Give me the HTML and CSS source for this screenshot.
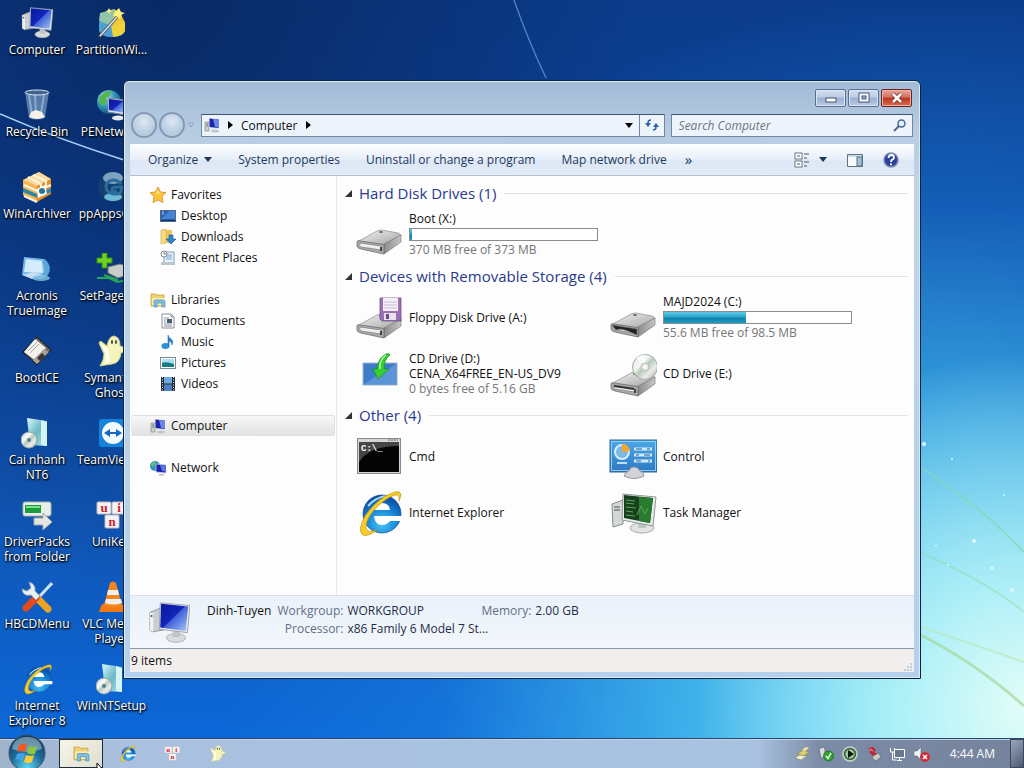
FILE: index.html
```html
<!DOCTYPE html>
<html lang="en">
<head>
    <meta charset="UTF-8">
    <meta name="viewport" content="width=device-width, initial-scale=1.0">
    <title>Computer</title>
    <link rel="stylesheet" href="styles.css">
</head>
<body>
    <!-- shared icons -->
    <svg class="sprite" aria-hidden="true">
        <defs>
            <linearGradient id="g-screen" x1="0" y1="0" x2="1" y2="1">
                <stop offset="0" stop-color="#0a16a0"/><stop offset=".48" stop-color="#1226b8"/>
                <stop offset=".5" stop-color="#3f5fda"/><stop offset="1" stop-color="#a9c8f8"/>
            </linearGradient>
            <linearGradient id="g-metal" x1="0" y1="0" x2="1" y2="1">
                <stop offset="0" stop-color="#f4f4f4"/><stop offset="1" stop-color="#a3a3a3"/>
            </linearGradient>
            <linearGradient id="g-side" x1="0" y1="0" x2="1" y2="0">
                <stop offset="0" stop-color="#8c8c8c"/><stop offset="1" stop-color="#c4c4c4"/>
            </linearGradient>
            <linearGradient id="g-blue" x1="0" y1="0" x2="0" y2="1">
                <stop offset="0" stop-color="#4aa8e6"/><stop offset="1" stop-color="#2f78c4"/>
            </linearGradient>
            <radialGradient id="g-ie" cx=".5" cy=".75" r=".75">
                <stop offset="0" stop-color="#48c4f8"/><stop offset=".55" stop-color="#1583d6"/><stop offset="1" stop-color="#0c439c"/>
            </radialGradient>
            <radialGradient id="g-globe" cx=".35" cy=".3" r=".8">
                <stop offset="0" stop-color="#b5ecf2"/><stop offset=".5" stop-color="#2f93b8"/><stop offset="1" stop-color="#0c4676"/>
            </radialGradient>
            <linearGradient id="g-case" x1="0" y1="0" x2="1" y2="1">
                <stop offset="0" stop-color="#d9fafa"/><stop offset=".5" stop-color="#6cb9c8"/><stop offset="1" stop-color="#a9e4e4"/>
            </linearGradient>
            <radialGradient id="g-orb" cx=".5" cy=".9" r=".9">
                <stop offset="0" stop-color="#5fd6f4"/><stop offset=".5" stop-color="#1f6c9c"/><stop offset="1" stop-color="#17395a"/>
            </radialGradient>
            <linearGradient id="g-disc" x1="0" y1="0" x2="1" y2="1">
                <stop offset="0" stop-color="#d6d6d6"/><stop offset=".35" stop-color="#f8f8f8"/>
                <stop offset=".5" stop-color="#b5cbb9"/><stop offset=".7" stop-color="#ececec"/><stop offset="1" stop-color="#a0a0a0"/>
            </linearGradient>
        </defs>
        <symbol id="i-computer" viewBox="0 0 48 48">
            <path d="M2 12l12-5 4 25-13 2-3-2z" fill="#c9cfd0" stroke="#8b9496"/>
            <path d="M2 12l4 1v21l-4-2z" fill="#eef1ef"/>
            <circle cx="4" cy="16" r="1.200" fill="#4a5052"/>
            <ellipse cx="32" cy="41" rx="11" ry="5" fill="#d8dcdc" stroke="#a9afb0"/>
            <path d="M28 30h8l1 10h-9z" fill="#bfc5c6"/>
            <path d="M14 1l34 3-3 31-32-4z" fill="#e8ecec" stroke="#959d9f"/>
            <path d="M15 2l31 3-3 28-29-4z" fill="url(#g-screen)"/>
        </symbol>
        <symbol id="i-computer-small" viewBox="0 0 16 16">
            <path d="M1 5h4v9H1z" fill="#cdd3cd" stroke="#8b968e" stroke-width=".8"/>
            <path d="M2 7h2M2 9h2" stroke="#69756c"/>
            <ellipse cx="11" cy="14" rx="4" ry="1.500" fill="#c2c8c8"/>
            <path d="M5 1l10 1v10L5 11z" fill="#dbe0e6"/>
            <path d="M5.500 1.500l9 1v8.500l-9-1z" fill="#1a22b4"/>
            <path d="M9 2l5.500.5v8L11 10z" fill="#6f86e2"/>
        </symbol>
        <symbol id="i-drive" viewBox="0 0 48 48">
            <path d="M2 31l20-11q2-1 5-1l16 3q3 1 3 3L29 34z" fill="url(#g-metal)" stroke="#8e8e8e" stroke-width=".7"/>
            <path d="M29 33l17-9v7L29 43z" fill="url(#g-side)" stroke="#707070" stroke-width=".6"/>
            <path d="M2 31q0-2 3-1l24 3.500v9.500L6 38q-4-1-4-3z" fill="#ababab" stroke="#6c6c6c" stroke-width=".8"/>
            <path d="M5 32l21 3v4L6 36q-2-1-1-4z" fill="#eee" stroke="#7b7b7b" stroke-width=".7"/>
            <path d="M26 36v4" stroke="#222" stroke-width="1.500"/>
            <ellipse cx="26" cy="21" rx="2" ry="1" fill="#666"/>
        </symbol>
        <symbol id="i-ie" viewBox="0 0 48 48">
            <circle cx="27" cy="25" r="19" fill="url(#g-ie)" stroke="#12488f" stroke-width=".7"/>
            <path d="M19 21q1-7 8-7t8 7z" fill="#fff"/>
            <path d="M19 27h28v5H35q-3 4-8 4-7 0-8-9z" fill="#fff"/>
            <path d="M13 17Q20 9 30 7" stroke="#9fd8f8" stroke-width="2" fill="none"/>
            <path d="M44 12Q49 1 40 3 23 8 10 27 2 42 8 46q5 2 14-5Q11 45 11 38q0-10 13-22Q34 7 41 6q4-1 3 6z" fill="#f5cc28" stroke="#c39413" stroke-width=".7"/>
        </symbol>
        <symbol id="i-globe" viewBox="0 0 32 32">
            <circle cx="13" cy="13" r="12" fill="url(#g-globe)"/>
            <path d="M4 8q5-7 11-6l-1 5-4 2 1 4-5 4-3-4zM15 13l7-4 2 5-5 7-4-2z" fill="#52b54d"/>
            <path d="M12 9l19 2-1 15-18-3z" fill="#d9e5ee" stroke="#78879a"/>
            <path d="M13 10l17 2-1 12-16-3z" fill="url(#g-screen)"/>
            <ellipse cx="22" cy="29" rx="6" ry="2.500" fill="#e5e9ea"/>
        </symbol>
        <symbol id="i-network" viewBox="0 0 16 16">
            <circle cx="5" cy="6" r="5" fill="#2f93b8"/>
            <path d="M1 5q2-4 5-4l-1 3-2 3z" fill="#6cc36a"/>
            <path d="M6 4l10 1v8L6 12z" fill="#1a22b4" stroke="#c3cfe4" stroke-width=".8"/>
            <path d="M10 5l5 .5v6L12 11z" fill="#5b78dc"/>
            <path d="M9 14h5v1.500H9z" fill="#b5bdc4"/>
        </symbol>
        <symbol id="i-ghost" viewBox="0 0 32 32">
            <path d="M3 8q1-3 3-1l5 4Q13 1 18 1q6 1 6 10l6 2q2 2-1 3l-4 2q-1 10-9 11-7 1-12 2 4-6 4-12z" fill="#f4f3b9" stroke="#cdd187"/>
            <path d="M5 9l7 4 2 14-5 2q3-10-4-20z" fill="#fffef0"/>
            <ellipse cx="16" cy="7" rx="1" ry="2" fill="#444"/><ellipse cx="20" cy="7" rx="1" ry="2" fill="#444"/>
        </symbol>
        <symbol id="i-library" viewBox="0 0 16 16">
            <path d="M1 2h5l1 1h7v11H1z" fill="#f0d272" stroke="#c7a03c" stroke-width=".8"/>
            <path d="M2 6h13v7H2z" fill="#fbeeb1"/>
            <path d="M4 15V9q0-1 1-1h8q2 0 2 2v5h-3v-4H7v4z" fill="#7fc0e2" stroke="#4b93ba" stroke-width=".7"/>
        </symbol>
        <symbol id="i-setup" viewBox="0 0 32 32">
            <path d="M6 1l20 3v25L9 28z" fill="url(#g-case)"/>
            <path d="M20 3l6 2v24l-6-1z" fill="#d4f5f2"/>
            <circle cx="8" cy="23" r="8" fill="url(#g-disc)" stroke="#8aa4aa"/>
            <circle cx="8" cy="23" r="2" fill="#57808c"/>
        </symbol>
    </svg>

    <main class="desktop">
        <svg class="wallpaper" viewBox="0 0 1024 738" preserveAspectRatio="none" aria-hidden="true">
            <g fill="none">
                <path d="M0 114Q60 140 124 160T330 210" stroke="#a8d0f8" stroke-width="1.600"/>
                <path d="M514 0Q528 40 546 78" stroke="#6fa8d8" stroke-width="1.300" opacity=".7"/>
                <path d="M905 458Q975 500 1024 552" stroke="#7fdcaf" stroke-width="2" opacity=".7"/>
                <path d="M915 550Q985 580 1024 612" stroke="#85dca6" stroke-width="2" opacity=".4"/>
                <path d="M915 632Q975 662 1024 706" stroke="#a2d99b" stroke-width="3" opacity=".7"/>
                <path d="M915 625Q975 645 1024 662" stroke="#b6e8b0" stroke-width="2" opacity=".6"/>
            </g>
            <g fill="#d9f6ff">
                <circle cx="924" cy="444" r="2"/><circle cx="952" cy="459" r="1"/><circle cx="1004" cy="495" r="1"/>
                <circle cx="974" cy="541" r="2"/><circle cx="936" cy="546" r="1"/><circle cx="992" cy="568" r="2"/>
                <circle cx="948" cy="565" r="1"/><circle cx="1012" cy="590" r="2"/>
            </g>
        </svg>

        <nav class="shortcuts" aria-label="Desktop">
            <a class="shortcut" href="#"><svg><use href="#i-computer"/></svg><span>Computer</span></a>
            <a class="shortcut" href="#">
                <svg viewBox="0 0 32 32"><path d="M3 16q0-5 13-5t13 5v8q-2 6-13 6T3 24z" fill="#4f9fd0"/><path d="M14 12q14-1 15 4v8q-2 5-12 6z" fill="#f0d23b"/><path d="M3 14L4 6l14-4 7 4 1 9-10 4z" fill="#91c4a8"/><path d="M18 3l7 4 4 9-12 3z" fill="#efc938"/><path d="M3 30L21 10" stroke="#47535e" stroke-width="3"/><path d="M4 29L21 10" stroke="#dfe6e9" stroke-width="1.500"/><path d="M23 1l2 4 4 1-4 2-1 4-3-3-4 0 2-4zM13 1l1 2 2 1-2 1-1 2-1-2-2-1 2-1z" fill="#fff27a"/></svg>
                <span>PartitionWi...</span>
            </a>
            <a class="shortcut" href="#">
                <svg viewBox="0 0 32 32"><path d="M4 3h24l-4 26q-8 3-16 0z" fill="#7fa3c8" opacity=".65"/><path d="M8 6l3 20M14 6l1 20M23 6l-3 18" stroke="#cfe3f6" stroke-width="2" opacity=".45"/><ellipse cx="16" cy="3.500" rx="12" ry="2.500" fill="#42648c" stroke="#d7e7f6"/><path d="M8 28l2-5 5-2 6 2 3 5q-8 4-16 0z" fill="#f3f1e8"/></svg>
                <span>Recycle Bin</span>
            </a>
            <a class="shortcut" href="#"><svg><use href="#i-globe"/></svg><span>PENetwork</span></a>
            <a class="shortcut" href="#">
                <svg viewBox="0 0 32 32"><path d="M2 9L18 1l12 7v15L16 31 2 24z" fill="#e78b1f"/><path d="M2 9l14 6v16L2 24z" fill="#f6b65a"/><path d="M2 9L18 1l12 7-14 7z" fill="#fbd89e"/><path d="M7 6l13 7v5M12 4l13 6v5M3 14l13 6 14-6M3 25l13 6" stroke="#fff6e0" stroke-width="2" fill="none"/><path d="M2 17l14 6v4L2 21zM24 20l6-3v4l-6 3z" fill="#2a87a6"/><path d="M16 18l8-4 2 9-9 4z" fill="#fff"/><circle cx="21" cy="20" r="3" fill="#2478a0"/></svg>
                <span>WinArchiver</span>
            </a>
            <a class="shortcut" href="#">
                <svg viewBox="0 0 32 32"><circle cx="17" cy="16" r="15" fill="#153f6e"/><ellipse cx="17" cy="7" rx="10" ry="6" fill="#7ba3bf"/><ellipse cx="17" cy="26" rx="9" ry="4" fill="#6dbad4"/><path d="M25 13q-3-4-8-4-7 1-7 7t8 7 8-7h-5q-5 0-5 3t5 1" stroke="#2b6c9c" stroke-width="3" fill="none"/></svg>
                <span>ppAppsGen</span>
            </a>
            <a class="shortcut" href="#">
                <svg viewBox="0 0 32 32"><path d="M3 4l20 2 2 18-24-2z" fill="#79b9e6"/><path d="M5 6l16 2 1 12-19-1z" fill="#d4ecfb"/><path d="M1 22l12-3 9 3-11 4z" fill="#c4e0f0"/><path d="M24 6q8 8 3 16-5 6-14 3 12-2 11-12-2-3-3-4z" fill="#5da6d8"/><ellipse cx="20" cy="25" rx="9" ry="3" fill="#83c5de" opacity=".8"/></svg>
                <span>Acronis TrueImage</span>
            </a>
            <a class="shortcut" href="#">
                <svg viewBox="0 0 32 32"><path d="M12 14l12-3 10 3v7l-12 4-10-5z" fill="#c8cdca" stroke="#737b78"/><path d="M1 25h12l8 4 11-2M8 22l14 5" stroke="#25a655" stroke-width="2" fill="none"/><path d="M6 0h5v5h5v5h-5v5H6v-5H1V5h5z" fill="#6fd024" stroke="#2f8d10"/></svg>
                <span>SetPageFile</span>
            </a>
            <a class="shortcut" href="#">
                <svg viewBox="0 0 32 32"><path d="M16 2l14 13-14 15L2 17z" fill="#6d6860" stroke="#111"/><path d="M14 4l11 9-11 12L3 17z" fill="#f3f1e9"/><path d="M7 16l9-9M9 18l9-9" stroke="#aaa" stroke-width="1"/><path d="M23 14l5 3-12 12-4-4z" fill="#a7a297"/><path d="M21 18l3 3-5 5-3-3z" fill="#383530"/></svg>
                <span>BootICE</span>
            </a>
            <a class="shortcut" href="#"><svg><use href="#i-ghost"/></svg><span>Symantec Ghost</span></a>
            <a class="shortcut" href="#"><svg><use href="#i-setup"/></svg><span>Cai nhanh NT6</span></a>
            <a class="shortcut" href="#">
                <svg viewBox="0 0 32 32"><rect x="3" y="2" width="28" height="28" rx="3" fill="#1582dc"/><circle cx="17" cy="16" r="11" fill="#f2f9ff"/><path d="M8 16l6-4v3h6v-3l6 4-6 4v-3h-6v3z" fill="#1768c4"/></svg>
                <span>TeamViewer</span>
            </a>
            <a class="shortcut" href="#">
                <svg viewBox="0 0 32 32"><rect x="2" y="3" width="28" height="14" rx="2" fill="#e8eee8" stroke="#a5b7a9"/><rect x="4" y="6" width="16" height="8" fill="#1d9e3c"/><path d="M5 8h14" stroke="#7fe08c" stroke-width="2"/><path d="M13 19h9v-5l9 9-9 8v-5h-9z" fill="#e5e6e2" stroke="#a6a9a5"/></svg>
                <span>DriverPacks from Folder</span>
            </a>
            <a class="shortcut" href="#">
                <svg class="unikey" viewBox="0 0 32 32"><rect x="1" y="3" width="14" height="12" rx="1"/><rect x="16" y="3" width="14" height="12" rx="1"/><rect x="9" y="16" width="14" height="13" rx="1"/><text x="8" y="13">u</text><text x="23" y="13">i</text><text x="16" y="27">n</text></svg>
                <span>UniKey</span>
            </a>
            <a class="shortcut" href="#">
                <svg viewBox="0 0 32 32"><path d="M15 16l12 12" stroke="#f0a223" stroke-width="7" stroke-linecap="round"/><path d="M19 15L31 2" stroke="#cde0ef" stroke-width="3"/><path d="M5 27l10-10" stroke="#e34b1c" stroke-width="7" stroke-linecap="round"/><path d="M1 8q1 8 9 6l5 5 4-4-5-5q1-7-6-9l2 6-4 3z" fill="#e9f0f5" stroke="#8ba0b0"/></svg>
                <span>HBCDMenu</span>
            </a>
            <a class="shortcut" href="#">
                <svg viewBox="0 0 32 32"><path d="M5 25l3-3h16l7 5-1 4H3z" fill="#ef7a16"/><path d="M14 2q3-3 6 0l6 22q-9 5-18 0z" fill="#f5861d"/><path d="M12 9h10l1 5H11zM10 18h15l1 4q-9 3-17 0z" fill="#f1efec"/></svg>
                <span>VLC Media Player</span>
            </a>
            <a class="shortcut" href="#"><svg><use href="#i-ie"/></svg><span>Internet Explorer 8</span></a>
            <a class="shortcut" href="#"><svg><use href="#i-setup"/></svg><span>WinNTSetup</span></a>
        </nav>

        <section class="window" aria-label="Computer">
            <header class="titlebar">
                <button class="win-btn" aria-label="Minimize"><svg viewBox="0 0 12 12"><rect x="1" y="6" width="10" height="4" fill="#fff" stroke="#44557a"/></svg></button>
                <button class="win-btn" aria-label="Maximize"><svg viewBox="0 0 12 12"><rect x="1" y="1" width="10" height="9" fill="#fff" stroke="#44557a"/><rect x="4" y="4" width="4" height="3" fill="#9fb4d4" stroke="#44557a"/></svg></button>
                <button class="win-btn close" aria-label="Close"><svg viewBox="0 0 12 12"><path d="M2 2l8 8M10 2l-8 8" stroke="#6b2b2b" stroke-width="4"/><path d="M2 2l8 8M10 2l-8 8" stroke="#fff" stroke-width="2.500"/></svg></button>
            </header>

            <div class="navbar">
                <div class="history">
                    <button class="round" aria-label="Back"></button>
                    <button class="round" aria-label="Forward"></button>
                    <button class="recent" aria-label="Recent pages"><svg viewBox="0 0 8 6"><path d="M1 1h6L4 5z" fill="none" stroke="#93a5bd"/></svg></button>
                </div>
                <div class="address">
                    <svg class="small-icon"><use href="#i-computer-small"/></svg>
                    <svg class="arrow" viewBox="0 0 5 8"><path d="M0 0l5 4-5 4z"/></svg>
                    <a href="#">Computer</a>
                    <svg class="arrow" viewBox="0 0 5 8"><path d="M0 0l5 4-5 4z"/></svg>
                    <button class="drop" aria-label="Previous locations"><svg viewBox="0 0 8 5"><path d="M0 0h8L4 5z"/></svg></button>
                    <button class="refresh" aria-label="Refresh"><svg viewBox="0 0 16 16"><path d="M7 3Q4 3 4 6M9 13q3 0 3-3" fill="none" stroke="#2f5fa8" stroke-width="1.500"/><path d="M1 6h6l-3 4zM9 10h6l-3-4z" fill="#2f5fa8"/></svg></button>
                </div>
                <label class="search">
                    <input type="search" placeholder="Search Computer" aria-label="Search Computer">
                    <svg viewBox="0 0 14 14"><circle cx="8.500" cy="5.500" r="3.500" fill="#e5f2fa" stroke="#476994" stroke-width="1.500"/><path d="M6 8l-5 5" stroke="#476994" stroke-width="2"/></svg>
                </label>
            </div>

            <div class="commands">
                <button>Organize <svg class="caret" viewBox="0 0 8 5"><path d="M0 0h8L4 5z"/></svg></button>
                <button>System properties</button>
                <button>Uninstall or change a program</button>
                <button>Map network drive</button>
                <button class="more" aria-label="More">»</button>
                <div class="views">
                    <button class="view" aria-label="Change your view">
                        <svg class="small-icon" viewBox="0 0 16 16"><rect x="1" y="1" width="7" height="6" fill="#fff" stroke="#6b7683"/><rect x="1" y="9" width="7" height="6" fill="#fff" stroke="#6b7683"/><path d="M3 4h3M3 12h3M10 2h5M10 6h3M10 10h5M10 14h3" stroke="#42566b"/></svg>
                        <svg class="caret" viewBox="0 0 8 5"><path d="M0 0h8L4 5z"/></svg>
                    </button>
                    <button aria-label="Show the preview pane"><svg class="small-icon" viewBox="0 0 16 16"><path d="M.5 2.500h15v12H.5z" fill="#f7fbff" stroke="#597387"/><path d="M1 4h14" stroke="#a3b9c6"/><rect x="10" y="5" width="5" height="9" fill="#9fc3d0" stroke="#597387"/></svg></button>
                    <button aria-label="Get help"><svg class="small-icon" viewBox="0 0 16 16"><circle cx="8" cy="8" r="7" fill="#2b3f9e" stroke="#8190b2" stroke-width="1.500"/><path d="M5.500 6q0-3 3-3 2.500.2 2.500 2.400 0 1.300-1.500 2T8 10" fill="none" stroke="#fff" stroke-width="1.800"/><circle cx="8" cy="12.300" r="1.100" fill="#fff"/></svg></button>
                </div>
            </div>

            <div class="content">
                <nav class="sidebar" aria-label="Folders">
                    <ul>
                        <li><a href="#"><svg class="small-icon" viewBox="0 0 16 16"><path d="M8 0l2.500 5 5.500.6-4 4 1 6L8 13l-5 2.600 1-6-4-4L5.500 5z" fill="#fbc43b" stroke="#d98a25" stroke-width=".8"/><path d="M8 3l1.300 3 3 .5H6z" fill="#fff0a8"/></svg>Favorites</a></li>
                        <li class="child"><a href="#"><svg class="small-icon" viewBox="0 0 16 16"><rect x=".5" y="2.500" width="15" height="11" fill="#2a5eaf" stroke="#4c6a94"/><path d="M1 11L9 3h6v8z" fill="#4582cf"/><path d="M1 12.500h14" stroke="#122f58"/><path d="M2 4h2M2 6h2" stroke="#b5d6f6"/></svg>Desktop</a></li>
                        <li class="child"><a href="#"><svg class="small-icon" viewBox="0 0 16 16"><path d="M1 1l5-1v14l-5 1z" fill="#f6dc82" stroke="#d2a944" stroke-width=".6"/><path d="M6 1h6v13H6z" fill="#eac45c"/><path d="M9 6h4v4h3l-5 5-5-5h3z" fill="#2b86cc" stroke="#185890" stroke-width=".6"/></svg>Downloads</a></li>
                        <li class="child"><a href="#"><svg class="small-icon" viewBox="0 0 16 16"><rect x="4" y="2" width="10" height="11" fill="#e9f2fb" stroke="#7f9cb8"/><path d="M6 5h6M6 7h6M6 9h6" stroke="#7aa4d4"/><path d="M1 12h14v3H1z" fill="#b9c6ce"/><circle cx="4" cy="4" r="3" fill="#fff" stroke="#7c8994"/><path d="M4 2v2h2" fill="none" stroke="#444" stroke-width=".7"/></svg>Recent Places</a></li>
                    </ul>
                    <ul>
                        <li><a href="#"><svg class="small-icon"><use href="#i-library"/></svg>Libraries</a></li>
                        <li class="child"><a href="#"><svg class="small-icon" viewBox="0 0 16 16"><path d="M2 1h9l3 3v11H2z" fill="#fdfdfd" stroke="#8a9299"/><path d="M11 1v3h3M4 5h5M4 7h2M4 9h2M4 11h8M4 13h8" fill="none" stroke="#8a9299"/><rect x="7" y="6" width="5" height="4" fill="#465f70"/></svg>Documents</a></li>
                        <li class="child"><a href="#"><svg class="small-icon" viewBox="0 0 16 16"><ellipse cx="5.500" cy="12" rx="4" ry="3" fill="#2c90d8"/><path d="M8 12V1q1 3 3 4 3 2 1 6 0-3-3-4v5z" fill="#287ec4" stroke="#287ec4" stroke-width=".6"/></svg>Music</a></li>
                        <li class="child"><a href="#"><svg class="small-icon" viewBox="0 0 16 16"><rect x=".5" y="2.500" width="15" height="11" fill="#fff" stroke="#7b8b96"/><rect x="2" y="4" width="12" height="8" fill="#a6dff0"/><path d="M2 8q4-2 12 1v3H2z" fill="#187a86"/></svg>Pictures</a></li>
                        <li class="child"><a href="#"><svg class="small-icon" viewBox="0 0 16 16"><rect x="1" y="1" width="14" height="14" fill="#1e2a36"/><rect x="4" y="1" width="8" height="6.500" fill="#70a8e0"/><rect x="4" y="8.500" width="8" height="6.500" fill="#4d7fc0"/><path d="M2.500 1v14M13.500 1v14" stroke="#e0e8ee" stroke-dasharray="1 1.500"/></svg>Videos</a></li>
                    </ul>
                    <ul>
                        <li class="selected"><a href="#"><svg class="small-icon"><use href="#i-computer-small"/></svg>Computer</a></li>
                    </ul>
                    <ul>
                        <li><a href="#"><svg class="small-icon"><use href="#i-network"/></svg>Network</a></li>
                    </ul>
                </nav>

                <div class="files">
                    <section>
                        <h2><button><svg viewBox="0 0 7 7"><path d="M7 0v7H0z"/></svg>Hard Disk Drives (1)</button></h2>
                        <div class="items">
                            <a class="item" href="#">
                                <svg><use href="#i-drive"/></svg>
                                <div><p>Boot (X:)</p><div class="bar" role="progressbar" aria-label="Boot (X:) used" aria-valuenow="1"><div style="width: 1%"></div></div><p class="muted">370 MB free of 373 MB</p></div>
                            </a>
                        </div>
                    </section>
                    <section>
                        <h2><button><svg viewBox="0 0 7 7"><path d="M7 0v7H0z"/></svg>Devices with Removable Storage (4)</button></h2>
                        <div class="items">
                            <a class="item" href="#">
                                <svg viewBox="0 0 48 48"><use href="#i-drive" width="48" height="48" y="1"/><path d="M25 4h21v23H27l-2-2z" fill="#9b70b4" stroke="#70518a" stroke-width=".8"/><rect x="28" y="4" width="15" height="13" fill="#f4eef7"/><path d="M29 8h13M29 11h13M29 14h13" stroke="#cbbcd6"/><rect x="29" y="19" width="12" height="7" fill="#e9e1ee"/><rect x="31" y="20" width="3" height="5" fill="#6f4c88"/></svg>
                                <div><p>Floppy Disk Drive (A:)</p></div>
                            </a>
                            <a class="item" href="#">
                                <svg viewBox="0 0 48 48"><use href="#i-drive" width="48" height="48"/><path d="M3 31l25 4v6l-9-4q-8-3-12-1z" fill="#222" stroke="#777" stroke-width=".6"/></svg>
                                <div><p>MAJD2024 (C:)</p><div class="bar" role="progressbar" aria-label="MAJD2024 (C:) used" aria-valuenow="44"><div style="width: 44%"></div></div><p class="muted">55.6 MB free of 98.5 MB</p></div>
                            </a>
                            <a class="item" href="#">
                                <svg viewBox="0 0 48 48"><rect x="8" y="13" width="34" height="22" fill="#3c7cc8" stroke="#a1b7d0"/><path d="M9 34L41 14v20z" fill="#5b95d8"/><path d="M31 4q4-1 4 1-6 4-6 14h5L23 29 18 19h4Q23 8 31 4z" fill="#35cf35" stroke="#1b961c" stroke-width=".8"/><path d="M31 5q-7 5-6 14" fill="none" stroke="#b2f5a5" stroke-width="1.500"/></svg>
                                <div><p>CD Drive (D:)</p><p>CENA_X64FREE_EN-US_DV9</p><p class="muted">0 bytes free of 5.16 GB</p></div>
                            </a>
                            <a class="item" href="#">
                                <svg viewBox="0 0 48 48"><use href="#i-drive" width="48" height="48" y="3"/><path d="M5 36l20 3" stroke="#333" stroke-width="2"/><circle cx="36" cy="17" r="12.500" fill="url(#g-disc)" stroke="#a5aaa5"/><path d="M36 17L27 8q5-4 10-3z" fill="#fff" opacity=".7"/><circle cx="36" cy="17" r="4" fill="#e7ebe7" stroke="#b6bab6"/><circle cx="36" cy="17" r="1.500" fill="#fff"/></svg>
                                <div><p>CD Drive (E:)</p></div>
                            </a>
                        </div>
                    </section>
                    <section>
                        <h2><button><svg viewBox="0 0 7 7"><path d="M7 0v7H0z"/></svg>Other (4)</button></h2>
                        <div class="items">
                            <a class="item" href="#">
                                <svg viewBox="0 0 48 48"><rect x="2.500" y="5.500" width="43" height="35" fill="#d5d5d5" stroke="#8b8b8b"/><path d="M33 7h10" stroke="#555" stroke-dasharray="2 1"/><rect x="4" y="9" width="40" height="30" fill="#050505"/><path d="M4 9h40v4Q14 13 4 29z" fill="#464646"/><text class="prompt" x="6" y="18">C:\_</text></svg>
                                <div><p>Cmd</p></div>
                            </a>
                            <a class="item" href="#">
                                <svg viewBox="0 0 48 48"><rect x="1" y="7" width="47" height="32" fill="url(#g-blue)" stroke="#2e659a"/><rect x="2.500" y="8.500" width="44" height="29" fill="none" stroke="#8fcdf2"/><circle cx="13" cy="19" r="7" fill="#7eb8e4" stroke="#d5efff" stroke-width="2"/><path d="M13 19v-8q7 0 8 7z" fill="#f3a52c"/><path d="M25 16h18M25 22h18M25 28h18" stroke="#d2ebfb" stroke-width="3"/><path d="M27 16h6M38 16h3M27 22h3M35 22h6M27 28h5M39 28h2" stroke="#1a5d9b"/><path d="M8 30h10" stroke="#b7e2fa" stroke-width="2"/><path d="M15 43q1-4 5-5 1-4 5-4t6 4q4 1 4 5-10 5-20 0z" fill="#d5d2d8" stroke="#9c98a3"/></svg>
                                <div><p>Control</p></div>
                            </a>
                            <a class="item" href="#">
                                <svg><use href="#i-ie"/></svg>
                                <div><p>Internet Explorer</p></div>
                            </a>
                            <a class="item" href="#">
                                <svg viewBox="0 0 48 48"><path d="M3 15l11-4v24l-10 3z" fill="#d3d8d5" stroke="#858c88"/><path d="M5 18h6M5 21h6" stroke="#4a504c"/><ellipse cx="33" cy="39" rx="12" ry="5" fill="#e1e4e2" stroke="#a6aca8"/><path d="M29 32h8v7h-8z" fill="#bfc5c1"/><path d="M14 5l33 3-3 29-31-6z" fill="#e8ecea" stroke="#909793"/><path d="M15 6l29 3-3 25-26-5z" fill="#183f1e"/><path d="M30 8l14 1-3 25-11-2z" fill="#2a7a32"/><path d="M17 11l9 1M17 14l8 1M17 18l10 1M17 22l7 1M17 26l9 1M28 26l4-9 4 8 3-6" stroke="#58a85a" fill="none"/></svg>
                                <div><p>Task Manager</p></div>
                            </a>
                        </div>
                    </section>
                </div>
            </div>

            <div class="details">
                <svg><use href="#i-computer"/></svg>
                <p class="name">Dinh-Tuyen</p>
                <dl>
                    <dt>Workgroup:</dt><dd>WORKGROUP</dd>
                    <dt>Processor:</dt><dd>x86 Family 6 Model 7 St...</dd>
                </dl>
                <dl>
                    <dt>Memory:</dt><dd>2.00 GB</dd>
                </dl>
            </div>
            <footer class="statusbar">
                <span>9 items</span>
                <svg viewBox="0 0 10 10"><path d="M8 1v2M5 4v2M8 4v2M2 7v2M5 7v2M8 7v2" stroke="#c6ccd4" stroke-width="2"/></svg>
            </footer>
        </section>
    </main>

    <footer class="taskbar">
        <button class="start" aria-label="Start">
            <svg viewBox="0 0 38 38"><circle cx="19" cy="19" r="18" fill="url(#g-orb)" stroke="#35566e"/><path d="M4 15Q6 3 19 3t15 12q-14 6-30 0z" fill="#cfe6ee" opacity=".45"/><path d="M11 11q5-3 8 0l-2 7q-4-2-8 0z" fill="#ee5a24"/><path d="M21 12q4 2 8 0l-2 8q-4 1-8-1z" fill="#8cc63e"/><path d="M9 20q4-2 8 0l-2 7q-4-3-8-1z" fill="#3fa4e4"/><path d="M18 21q4 2 8 0l-2 7q-4 2-8 0z" fill="#fccb32"/></svg>
        </button>
        <button class="task active" aria-label="Windows Explorer"><svg><use href="#i-library"/></svg></button>
        <button class="task" aria-label="Internet Explorer"><svg><use href="#i-ie"/></svg></button>
        <button class="task" aria-label="UniKey">
            <svg class="unikey" viewBox="0 0 32 32"><rect x="1" y="3" width="14" height="12" rx="1"/><rect x="16" y="3" width="14" height="12" rx="1"/><rect x="9" y="16" width="14" height="13" rx="1"/><text x="8" y="13">u</text><text x="23" y="13">i</text><text x="16" y="27">n</text></svg>
        </button>
        <button class="task" aria-label="Ghost"><svg><use href="#i-ghost"/></svg></button>
        <div class="tray">
            <svg viewBox="0 0 16 16"><path d="M1 12l6-4 6 2-6 4z" fill="#f1efd8" stroke="#8b8a62" stroke-width=".7"/><path d="M3 8l6-4 6 2-5 4z" fill="#d8cf75" stroke="#8b8340" stroke-width=".7"/><path d="M8 4l4-3 3 1-4 3z" fill="#f4e99c"/></svg>
            <svg viewBox="0 0 16 16"><path d="M1 3l4-2 2 2v8l-4 1z" fill="#d9dde0" stroke="#5c6670" stroke-width=".7"/><circle cx="10.500" cy="10" r="5" fill="#2fa42f" stroke="#14681a" stroke-width=".7"/><path d="M8 10l2 2.500L13 7" fill="none" stroke="#fff" stroke-width="1.500"/></svg>
            <svg viewBox="0 0 16 16"><circle cx="8" cy="8" r="7" fill="#3e6549" stroke="#c3d8c4" stroke-width="1.500"/><circle cx="8" cy="8" r="4.500" fill="#a4c6a2"/><path d="M6 4l6 4-6 4z" fill="#06180a"/></svg>
            <svg viewBox="0 0 16 16"><path d="M8 9l5-2 2 4-5 4-4-3z" fill="#c9cacc" stroke="#60636a" stroke-width=".7"/><path d="M2 2l5-1 3 3-2 2 3 2-4 2-4-4 2-1z" fill="#c42435"/><path d="M4 3l3 2" stroke="#f8b9bd"/></svg>
            <svg viewBox="0 0 16 16"><path d="M4.500 3.500h10v8h-10z" fill="#69788f" stroke="#fff"/><path d="M7 14.500h5M9.500 11v3M.5 2v4h4V2M2.500 6v8h4" fill="none" stroke="#fff"/></svg>
            <svg viewBox="0 0 16 16"><path d="M0 5h3l4-4v13l-4-4H0z" fill="#f0f2f5" stroke="#596578" stroke-width=".6"/><circle cx="11" cy="11" r="5" fill="#cf2e39"/><path d="M9 9l4 4M13 9l-4 4" stroke="#fff" stroke-width="1.500"/></svg>
        </div>
        <time>4:44 AM</time>
        <button class="show-desktop" aria-label="Show desktop"></button>
    </footer>
    <svg class="cursor" viewBox="0 0 12 18" aria-hidden="true"><path d="M1 1v14l3-3 2 5 2-1-2-5h4z" fill="#fff" stroke="#000"/></svg>
</body>
</html>
```
FILE: styles.css
```css
* {
    box-sizing: border-box;
}
body {
    margin: 0;
    height: 100vh;
    display: flex;
    flex-direction: column;
    overflow: hidden;
    font-family: "Open Sans", "Noto Sans", sans-serif;
    font-size: 12px;
    line-height: 15px;
    color: #111;
}
button {
    font: inherit;
    color: inherit;
    background: none;
    border: none;
    padding: 0;
    display: flex;
    align-items: center;
    justify-content: center;
}
a {
    color: inherit;
    text-decoration: none;
}
p, ul, dl, dd, h2 {
    margin: 0;
    padding: 0;
}
ul {
    list-style: none;
}
svg {
    flex-shrink: 0;
}
.sprite {
    position: absolute;
    width: 0;
    height: 0;
}
.small-icon {
    width: 16px;
    height: 16px;
}
.unikey rect {
    fill: #f7f2f2;
    stroke: #bdb6c4;
}
.unikey text {
    font-family: "Liberation Serif", serif;
    font-weight: bold;
    font-size: 13px;
    fill: #d02030;
    text-anchor: middle;
    text-shadow: none;
}
.prompt {
    font-family: "Liberation Mono", monospace;
    font-weight: bold;
    font-size: 9px;
    fill: #fff;
}

/* desktop */
.desktop {
    flex: 1;
    min-height: 0;
    position: relative;
    background:
        radial-gradient(ellipse 32% 48% at 100% 96%, #e2fdf8 0%, rgba(190, 246, 248, 0.85) 35%, rgba(120, 226, 248, 0) 100%),
        radial-gradient(ellipse 70% 100% at 92% 98%, #6fe0fa 0%, rgba(66, 184, 236, 0.85) 38%, rgba(30, 130, 225, 0.45) 70%, rgba(20, 100, 210, 0) 100%),
        radial-gradient(ellipse 45% 80% at 16% 0%, rgba(8, 34, 84, 0.7), rgba(8, 40, 100, 0)),
        linear-gradient(180deg, #0b3b8a 0%, #0c4298 35%, #1055b4 70%, #0c68d8 100%);
}
.wallpaper {
    position: absolute;
    inset: 0;
    width: 100%;
    height: 100%;
}
.shortcuts {
    position: relative;
    display: grid;
    grid-template-columns: 74px 75px;
    grid-auto-rows: 82px;
}
.shortcut {
    display: flex;
    flex-direction: column;
    align-items: center;
    gap: 3px;
    padding-top: 7px;
    color: #fff;
    text-align: center;
    text-shadow: 1px 1px 2px #000, 0 1px 2px #000;
}
.shortcut svg {
    width: 32px;
    height: 32px;
}

/* explorer window */
.window {
    position: absolute;
    top: 80px;
    right: 103px;
    bottom: 59px;
    left: 123px;
    display: flex;
    flex-direction: column;
    padding: 0 6px 6px;
    border: 1px solid #10243f;
    border-radius: 6px 6px 0 0;
    background: linear-gradient(180deg, #a2bbd6 0, #b7cbe2 50px, #c0d3e8 100px, #b4d0ec 100%);
    box-shadow: inset 0 0 0 1px #dcebf8;
}
.titlebar {
    display: flex;
    justify-content: flex-end;
    gap: 2px;
    padding: 8px 2px 0;
    height: 31px;
}
.win-btn {
    width: 31px;
    height: 18px;
    border: 1px solid #5a6f90;
    border-radius: 2px;
    background: linear-gradient(180deg, #d3dff0 0%, #bccce2 45%, #9bb0cf 50%, #b9cce4 100%);
    box-shadow: inset 0 0 0 1px #dbe7f5;
}
.win-btn svg {
    width: 12px;
    height: 12px;
}
.close {
    border-color: #6a2424;
    background: linear-gradient(180deg, #e6a89c 0%, #d4705f 45%, #b93422 50%, #d86e50 100%);
    box-shadow: inset 0 0 0 1px #eab2a4;
}
.navbar {
    display: flex;
    align-items: center;
    gap: 6px;
    height: 32px;
    padding: 0 1px 6px;
}
.history {
    display: flex;
    align-items: center;
    gap: 2px;
    width: 64px;
}
.round {
    width: 26px;
    height: 26px;
    border: 2px solid #8499b4;
    border-radius: 50%;
    background: radial-gradient(circle at 50% 35%, #dce8f4, #b6c9de 70%, #d5e4f2);
}
.recent svg {
    width: 8px;
    height: 6px;
}
.address, .search {
    display: flex;
    align-items: center;
    height: 23px;
    border: 1px solid #6f87a4;
    border-top-color: #40566f;
    background: #eef4fc;
}
.address {
    flex: 1;
    gap: 8px;
    padding-left: 2px;
}
.arrow {
    width: 5px;
    height: 8px;
}
.drop {
    margin-left: auto;
    width: 12px;
}
.drop svg, .caret {
    width: 8px;
    height: 5px;
}
.caret {
    fill: #1e395b;
}
.refresh {
    align-self: stretch;
    width: 25px;
    margin-left: -4px;
    border-left: 1px solid #6f87a4;
}
.refresh svg {
    width: 16px;
    height: 16px;
}
.search {
    width: 31%;
    padding: 0 5px 0 7px;
}
.search input {
    flex: 1;
    min-width: 0;
    padding: 0;
    border: none;
    outline: none;
    background: none;
    font: inherit;
}
.search input::placeholder {
    color: #6d7680;
    font-style: italic;
}
.search svg {
    width: 14px;
    height: 14px;
}
.commands {
    display: flex;
    align-items: center;
    gap: 26px;
    height: 32px;
    padding: 0 15px 0 18px;
    color: #1e395b;
    background: linear-gradient(180deg, #fbfdff 0%, #eaf1fb 45%, #dde7f5 55%, #e2ebf7 100%);
    border-bottom: 1px solid #b2c1d4;
    white-space: nowrap;
}
.commands button {
    gap: 6px;
}
.commands .more {
    margin-left: -8px;
    font-size: 15px;
}
.views {
    display: flex;
    gap: 20px;
    margin-left: auto;
}
.commands .view {
    gap: 9px;
}
.content {
    flex: 1;
    min-height: 0;
    display: flex;
    background: #fdfdfd;
}
.sidebar {
    display: flex;
    flex-direction: column;
    gap: 21px;
    width: 207px;
    padding: 8px 1px 0;
    border-right: 1px solid #e2e8f0;
}
.sidebar a {
    display: flex;
    align-items: center;
    gap: 5px;
    height: 21px;
    padding-left: 18px;
    border: 1px solid transparent;
}
.sidebar .child a {
    padding-left: 28px;
}
.sidebar .selected a {
    border-color: #e0e0e0;
    border-left-color: #f0f0f0;
    border-radius: 2px;
    background: linear-gradient(180deg, #f7f7f7, #e2e2e2);
}
.files {
    flex: 1;
    min-width: 0;
    padding: 4px 6px 0 8px;
}
.files h2 {
    display: flex;
    align-items: center;
    gap: 8px;
    height: 27px;
    font-size: 15px;
    font-weight: normal;
    color: #2a3a8c;
}
.files h2::after {
    content: "";
    flex: 1;
    height: 1px;
    background: #e0e4ea;
}
.files h2 button {
    gap: 7px;
}
.files h2 svg {
    width: 7px;
    height: 7px;
    fill: #333;
}
.items {
    display: grid;
    grid-template-columns: repeat(auto-fill, 254px);
    grid-auto-rows: 56px;
    padding-left: 10px;
}
.item {
    display: flex;
    align-items: center;
    gap: 6px;
}
.item > svg {
    width: 48px;
    height: 48px;
}
.item > div {
    padding-bottom: 2px;
}
.bar {
    width: 189px;
    height: 13px;
    margin: 2px 0 1px;
    border: 1px solid #8c8c8c;
    background: #fff;
}
.bar div {
    height: 100%;
    background: linear-gradient(180deg, #5fcbe6 0%, #2fa9cc 40%, #1283ac 60%, #1b9cc4 100%);
}
.muted {
    color: #767676;
}
.details {
    display: flex;
    gap: 6px;
    height: 53px;
    padding: 6px 18px 0;
    line-height: 18px;
    color: #1e2d4a;
    background: linear-gradient(180deg, #eaf1fa, #f3f7fc);
    border-top: 1px solid #d5dfec;
}
.details svg {
    width: 42px;
    height: 42px;
    margin-right: 11px;
}
.details dl {
    display: grid;
    grid-template-columns: auto 128px;
    grid-auto-rows: 18px;
    column-gap: 4px;
    white-space: nowrap;
}
.details dt {
    color: #5f6f88;
    text-align: right;
}
.details .name {
    color: #111;
}
.statusbar {
    display: flex;
    justify-content: space-between;
    align-items: center;
    height: 24px;
    padding: 0 1px;
    background: #f1eeed;
    border-top: 1px solid #8f9aa8;
}
.statusbar svg {
    align-self: flex-end;
    width: 10px;
    height: 10px;
}

/* taskbar */
.taskbar {
    display: flex;
    align-items: center;
    height: 30px;
    padding-left: 8px;
    border-top: 1px solid #26476c;
    background: linear-gradient(90deg, #9fb3cb 0%, #a9c1de 12%, #a8c2e0 74%, #7d8ca6 80%, #74829c 100%);
    box-shadow: inset 0 1px 0 #c3d4e8;
}
.start {
    position: relative;
    width: 38px;
    height: 29px;
    margin-right: 13px;
}
.start svg {
    position: absolute;
    top: -5px;
    left: 0;
    width: 38px;
    height: 38px;
}
.task {
    width: 45px;
    height: 29px;
}
.task svg {
    width: 17px;
    height: 17px;
}
.task.active {
    width: 44px;
    margin-right: 2px;
    border: 1px solid #1d2b3c;
    background: linear-gradient(135deg, #f7f5e6, #dedfd2);
}
.tray {
    display: flex;
    gap: 8px;
    margin-left: auto;
}
.tray svg {
    width: 16px;
    height: 16px;
}
.taskbar time {
    margin: 0 15px 0 20px;
    color: #fff;
}
.show-desktop {
    width: 14px;
    height: 29px;
    border: 1px solid #3b475b;
    background: linear-gradient(135deg, #9aa8bd, #4d5a72);
}
.cursor {
    position: fixed;
    bottom: -12px;
    left: 96px;
    width: 12px;
    height: 18px;
}
```
